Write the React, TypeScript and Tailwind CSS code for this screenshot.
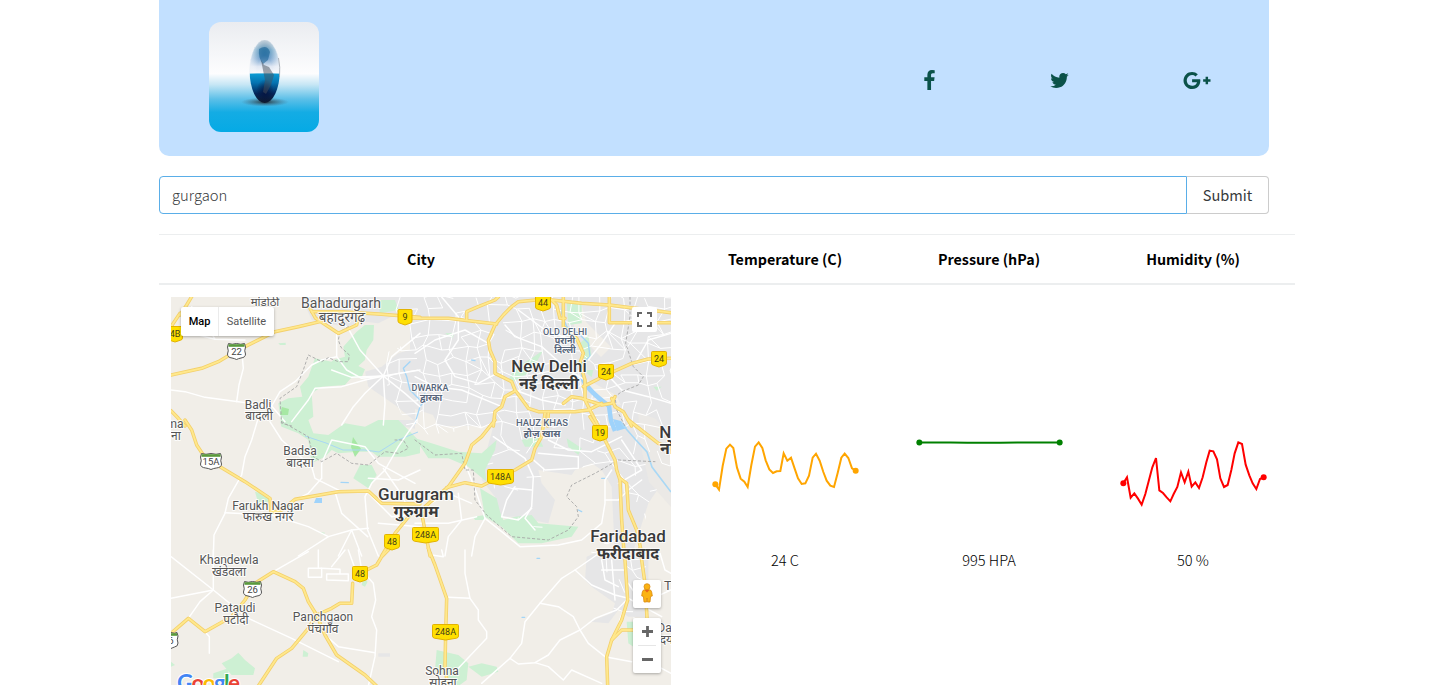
import React from "react";

type Tile = {
  x: number;
  y: number;
  urban: string[];
  green: string[];
  water: string[];
  minor: string[];
  major: string[];
  border: string[];
};

// Each tile is drawn at three units per pixel.
const tiles: Tile[] = [
  {
    x: -6,
    y: -7,
    urban: [
      "410,21 765,21 765,60 700,70 640,100 600,95 540,110 440,90",
      "600,245 650,230 700,190 765,170 765,405 690,345 610,290",
    ],
    green: [
      "575,125 600,105 627,105 625,150 605,180 600,210 580,228 600,238 590,262 555,265 510,245 480,235 505,210 540,200 535,170",
      "450,205 500,215 515,240 560,262 540,285 470,290 440,310 445,380 400,410 350,410 340,340 370,325 412,320 405,290 430,260",
      "640,30 690,30 700,60 645,70",
      "340,160 362,158 362,165 345,165",
    ],
    water: ["735,215 715,235 725,260 735,300 765,330"],
    minor: [
      "18,300 60,305 120,322 220,335 320,348 360,395",
      "230,178 235,235 222,285 215,335",
      "515,130 515,200 470,210 440,225 390,275 345,305 320,348",
      "515,200 545,240 590,265 655,258",
      "655,258 585,180 555,125 540,105",
      "655,258 660,340 655,405",
      "655,258 600,310 565,350 530,405",
      "655,258 720,310 765,350",
      "655,258 600,270 530,290 450,295 430,330 380,395",
      "655,258 680,200 765,130",
      "655,258 765,240",
      "80,130 150,148 240,150",
      "80,50 120,95 150,148",
      "655,258 560,262 500,240",
    ],
    major: [
      "18,255 110,235 160,215 210,185 270,155 330,125 400,110 465,95",
      "435,55 452,85 520,130 575,105 582,70",
      "440,65 530,65 640,72 765,82",
      "45,75 65,45 83,15",
      "18,110 45,70",
      "18,362 40,385 60,408",
    ],
    border: [
      "550,110 525,125 520,150 528,172 553,195 550,215 520,215 490,203 470,215 430,195 415,240 395,290 345,325 350,400 380,408",
    ],
  },
  {
    x: 244,
    y: -7,
    urban: ["-15,21 768,21 768,408 0,408 -15,330"],
    green: [
      "455,35 500,35 500,100 460,105",
      "385,180 350,205 300,235 280,270 295,275 340,250 360,225",
      "520,135 530,200 510,215 495,160",
      "90,130 118,130 112,145",
      "515,240 535,240 530,262 515,250",
      "715,290 740,290 725,302",
    ],
    water: [
      "445,25 440,70 455,110 490,130 520,160 525,200 500,220 500,260 520,290",
      "0,400 15,350 30,330 30,310",
      "170,210 180,212",
    ],
    minor: [
      "0,190 60,150 150,120 220,160",
      "80,21 130,80 130,150 90,210 120,260 190,280 245,250",
      "0,260 60,290 140,300 260,350",
      "270,105 300,140 380,170 460,240 510,270",
      "310,60 390,120 470,150",
      "300,300 380,330 450,345",
      "600,100 560,160 520,210",
      "660,220 700,150 768,130",
      "573,250 620,300 700,320 768,340",
    ],
    major: [
      "-10,85 100,85 160,92 245,102",
      "155,88 155,65 190,50 240,30 250,21",
      "385,28 310,35 290,50 265,75 240,105 220,150 225,180 240,215 240,250 290,275 300,300 340,355 370,365 480,365 520,360 560,340",
      "300,303 270,320 260,350 240,365 235,408",
      "400,21 425,45 435,85 450,85",
      "445,21 445,110 485,145 505,190 495,220 510,270 510,330 530,370 550,408",
      "445,340 470,320 500,325 560,345 590,340 600,320",
      "583,21 583,98 768,98",
      "410,30 500,40 583,45 768,68",
      "505,290 573,255 650,220 700,207 768,205",
      "590,325 600,350 625,365 650,408",
      "400,370 397,408",
    ],
    border: [
      "645,21 645,80 632,160 655,230 685,260 670,285 620,305 600,320 605,360 630,408",
    ],
  },
  {
    x: -6,
    y: 123,
    urban: ["690,0 768,0 768,30 720,20"],
    green: [
      "345,5 430,0 445,40 490,45 540,10 600,20 640,0 700,0 765,65 765,100 720,110 640,110 620,95 580,95 520,100 500,90 480,110 440,130 430,60 400,40 350,20",
      "585,135 620,135 635,165 610,205 565,175",
      "270,215 310,225 312,245 280,250",
      "460,335 480,338 475,345",
    ],
    water: [
      "528,187 550,188",
    ],
    minor: [
      "315,5 350,60 440,140 450,175 530,215",
      "278,0 260,60 240,110 230,165 190,235 180,280 147,345 145,408",
      "180,278 320,285 430,320 490,350 560,330 610,325",
      "470,175 430,220 395,238",
      "470,175 470,130 500,60 600,80 640,130 750,190",
      "490,350 400,408",
      "755,0 700,80 660,150 620,190 600,230 608,330 640,408",
      "655,145 700,210 720,245",
      "510,215 530,280 608,350",
      "520,408 560,330 590,408",
      "610,175 700,180 765,150",
      "610,220 680,290 765,280",
      "640,310 765,320",
    ],
    major: [
      "60,0 80,30 95,75 115,105",
      "165,140 240,185 315,235 318,278 350,270 390,238 520,215 610,213 650,250 765,252",
      "650,408 690,340 735,285",
    ],
    border: [
      "350,5 430,50 445,110 470,125 515,100 560,130 610,135 660,95 700,100 730,85 715,60 690,60",
    ],
  },
  {
    x: 244,
    y: 123,
    urban: [
      "240,0 768,0 768,150 700,250 650,408 600,408 590,200 560,150 530,130 480,150 470,165 370,150 380,190 420,240 400,310 300,290 255,290 240,230 200,180 210,110",
    ],
    green: [
      "0,55 50,70 130,95 200,100 245,60 240,90 210,150 215,185 160,140 100,115 40,115",
      "195,205 245,235 255,275 265,300 300,290 350,285 370,310 490,320 470,350 380,370 310,370 260,320 210,290",
      "320,60 370,50 385,80 330,80",
      "455,55 500,85 490,105 460,80",
      "175,290 210,285 210,300 180,300",
    ],
    water: ["490,270 500,275", "560,175 575,175"],
    minor: [
      "235,50 330,115 355,170 350,260 330,295 360,330",
      "400,60 460,90 530,95 620,50",
      "300,200 275,240 260,290",
      "295,205 350,210",
      "210,295 260,335 315,380 430,375 500,360 560,310 570,250 570,180 590,150",
      "150,130 185,220 210,295 180,350 170,408",
      "610,190 680,150 620,60",
      "350,115 390,150 490,145 490,110 370,100",
      "130,220 140,300 100,350 90,408",
      "0,310 100,310 185,290",
      "30,260 100,220 170,250",
      "570,240 610,240 640,210 680,180",
      "260,290 310,300 350,265",
    ],
    major: [
      "240,0 200,50 170,75 150,130 100,200 30,260 20,280 45,408",
      "95,203 150,188 200,198 255,170 300,150 350,120 360,85 380,50 390,-20",
      "525,-10 570,60 600,120 605,150 615,180 620,300 628,408",
      "615,175 635,190 640,270 665,330 682,408",
      "640,0 730,70 768,85",
    ],
    border: [
      "0,60 60,105 140,100 150,150 175,150 180,240 215,285 290,350 400,360 460,330 490,290 485,260 455,230 470,195 540,160 610,120 720,125",
    ],
  },
  {
    x: -6,
    y: 253,
    urban: ["640,310 675,310 675,320 640,320"],
    green: [
      "170,340 200,325 220,308 240,330 270,355 265,375 200,375",
      "145,370 190,355 190,385 145,385",
      "595,85 608,95 600,110 590,105",
      "415,300 430,310 428,320 413,320",
      "18,335 30,345 18,350",
    ],
    water: [],
    minor: [
      "18,20 145,120 250,205 380,265 520,335",
      "145,0 145,120 18,145",
      "145,120 105,155 70,205",
      "325,65 430,5",
      "480,255 520,290 630,308",
      "580,0 590,60 625,100 632,150 620,200 635,240 630,320 610,408",
      "430,55 470,55 470,82 430,82 430,55",
      "470,55 525,58 525,72 550,72 550,92 485,90 485,72 525,72",
      "460,0 460,55",
      "120,245 133,260 133,310",
      "540,0 500,50",
      "550,0 575,70",
    ],
    major: [
      "18,250 70,205 120,245 200,200 240,150 270,100 325,65 390,95 415,115 430,155 455,195",
      "455,195 500,175 525,160 560,160 563,100",
      "585,70 635,45 650,20 675,-5",
      "455,195 430,235 380,295 335,325 280,408",
      "455,195 480,255 515,315 600,375 635,408",
    ],
    border: [],
  },
  {
    x: 244,
    y: 253,
    urban: [
      "515,20 560,0 700,0 700,200 640,200 610,180 580,220 525,215 590,190 600,160 530,110 510,90",
    ],
    green: [
      "65,300 130,315 160,340 155,390 130,408 95,380 60,360",
      "160,350 200,340 245,350 250,365 200,380",
      "635,215 655,215 655,290 640,280",
    ],
    water: ["366,25 374,25", "321,202 329,202"],
    minor: [
      "150,0 150,70 165,145 100,142",
      "165,145 190,180 190,210 215,245 215,265 130,355",
      "545,15 480,60 440,85 375,160 330,215 320,280 285,325 200,400",
      "375,160 430,170 475,200 495,240 520,280 570,320 650,335",
      "480,60 530,105 600,135 640,145 740,200",
      "285,325 310,342 360,338 400,315 435,270 495,240 540,205 605,180 640,145",
      "360,338 400,350 445,390 470,360 560,400",
      "80,0 85,20 50,15",
      "560,30 570,90 610,110",
      "590,30 600,150",
      "560,60 630,60",
      "735,10 750,60 768,70",
      "730,350 768,370",
      "640,100 680,160 768,120",
    ],
    major: [
      "40,-5 60,45 95,145 92,250 90,350 98,408",
      "628,0 638,150 620,210 590,270 575,320 578,408",
      "590,270 620,240 660,240",
      "675,-5 690,100 697,220",
    ],
    border: [],
  },
];

const streets = (() => {
  let seed = 11;
  const rnd = () => {
    seed = (seed * 16807) % 2147483647;
    return seed / 2147483647;
  };
  const step = 13;
  const cols = 26;
  const rows = 32;
  const pts: number[][][] = [];
  for (let r = 0; r < rows; r++) {
    pts.push([]);
    for (let c = 0; c < cols; c++) {
      pts[r].push([186 + c * step + rnd() * 9, -6 + r * step + rnd() * 9]);
    }
  }
  let d = "";
  const line = (a: number[], b: number[]) => {
    d += `M${a[0].toFixed(1)} ${a[1].toFixed(1)}L${b[0].toFixed(1)} ${b[1].toFixed(1)}`;
  };
  for (let r = 0; r < rows - 1; r++) {
    for (let c = 0; c < cols - 1; c++) {
      const dense = r < 11 ? 0.75 : 0.28;
      if (rnd() < dense) line(pts[r][c], pts[r][c + 1]);
      if (rnd() < dense) line(pts[r][c], pts[r + 1][c]);
      if (rnd() < 0.12) line(pts[r][c], pts[r + 1][c + 1]);
    }
  }
  return d;
})();

function Layer({
  pick,
  poly,
  ...rest
}: { pick: "urban" | "green" | "water" | "minor" | "major" | "border"; poly?: boolean } & React.SVGProps<SVGGElement>) {
  return (
    <g strokeLinejoin="round" strokeLinecap="round" fill="none" {...rest}>
      {tiles.map((t, i) => (
        <g key={i} transform={`translate(${t.x} ${t.y}) scale(0.33333)`}>
          {t[pick].map((p, j) =>
            poly ? <polygon key={j} points={p} /> : <polyline key={j} points={p} />
          )}
        </g>
      ))}
    </g>
  );
}

type Label = [string, number, number, number, string];

// text, centre x, baseline, size, kind
const labels: Label[] = [
  ["मांडोठी", 94, 9, 11.5, "t"],
  ["Bahadurgarh", 170, 11, 14, "t"],
  ["बहादुरगढ़", 171, 25, 13.5, "t"],
  ["Badli", 87, 112, 12, "t"],
  ["बादली", 88, 123, 12, "t"],
  ["ma", 4, 131, 12, "t"],
  ["ना", 5, 143, 12, "t"],
  ["Badsa", 129, 158, 12, "t"],
  ["बादसा", 129, 170, 12, "t"],
  ["Farukh Nagar", 97, 213, 12, "t"],
  ["फारुख नगर", 97, 224, 12, "t"],
  ["Khandewla", 58, 267, 12, "t"],
  ["खंडेवला", 58, 279, 12, "t"],
  ["Pataudi", 64, 315, 12, "t"],
  ["पटौदी", 65, 327, 12, "t"],
  ["Panchgaon", 152, 324, 12, "t"],
  ["पंचगाँव", 152, 336, 12, "t"],
  ["Sohna", 271, 378, 12, "t"],
  ["सोहना", 272, 390, 12, "t"],
  ["DWARKA", 259, 94, 9, "d"],
  ["द्वारका", 260, 104, 9, "dh"],
  ["OLD DELHI", 394, 38, 9, "d"],
  ["पुरानी", 394, 47, 9, "dh"],
  ["दिल्ली", 394, 56, 9, "dh"],
  ["HAUZ KHAS", 371, 129, 9.5, "d"],
  ["हौज़ खास", 371, 140, 9.7, "dh"],
  ["New Delhi", 378, 75, 16.8, "c"],
  ["नई दिल्ली", 378, 92, 16, "ch"],
  ["Gurugram", 245, 203, 17, "c"],
  ["गुरुग्राम", 245, 220, 16, "ch"],
  ["Faridabad", 457, 245, 17, "c"],
  ["फरीदाबाद", 457, 262, 16, "ch"],
  ["No", 499, 141, 17, "c"],
  ["नोएडा", 508, 157, 16, "ch"],
  ["T", 497, 293, 13, "t"],
  ["Dayal", 501, 335, 12, "t"],
  ["दयाल", 501, 347, 12, "t"],
];

const labelFill: Record<string, string> = {
  t: "#555",
  d: "#56657a",
  dh: "#56657a",
  c: "#3a3a3a",
  ch: "#3a3a3a",
};

const labelWeight: Record<string, number> = { t: 400, d: 500, dh: 700, c: 500, ch: 700 };

const shields: [string, number, number, number][] = [
  ["9", 234, 20, 14],
  ["44", 372, 6, 15],
  ["24", 435, 75, 15],
  ["24", 488, 62, 15],
  ["19", 429, 136, 15],
  ["148A", 329.5, 180, 26],
  ["248A", 254.5, 238, 26],
  ["48", 221, 245, 15],
  ["48", 189, 277, 15],
  ["248A", 274.5, 335, 26],
  ["4B", 4, 37, 15],
];

const crests: [string, number, number, number][] = [
  ["22", 65.5, 54, 18],
  ["15A", 40, 164, 21],
  ["26", 81.5, 292, 18],
  ["6", 0, 343, 14],
];

function MapCanvas() {
  return (
    <svg viewBox="0 0 500 388" className="block h-[388px] w-[500px]">
      <defs>
        <clipPath id="town">
          <polygon points="215,0 265,0 500,0 500,170 475,210 475,330 440,330 445,290 420,255 443,240 441,190 420,170 370,175 375,235 340,220 330,200 315,180 322,130 240,140 232,120 215,86 205,60 240,45" />
        </clipPath>
      </defs>
      <rect width="500" height="388" fill="#f1eee8" />
      <Layer pick="urban" poly style={{ fill: "#e6e6e7" }} />
      <polygon points="467,115 485,122 500,140 500,210 478,185 470,150" fill="#ebe9e6" />
      <path d="M395 5L410 5 415 25 440 50 430 60 405 35zM415 82L445 98 450 108 438 106 420 96z" fill="#f1eee8" />
      <path d="M244 112L262 118 270 135 244 140z" fill="#f1eee8" />
      <Layer pick="green" poly style={{ fill: "#cdf0d3" }} />
      <path d="M111 110l7 2-1 6-8 0zM182 140l8 12-6 8-4-10z" fill="#a7e8a4" />
      <path d="M145 201h6v5h-8z" fill="#9fd3fb" />
      <path d={streets} stroke="#fff" strokeWidth="1" fill="none" clipPath="url(#town)" />
      <Layer pick="water" stroke="#a3d5f7" strokeWidth="4" />
      <path
        d="M134 139L155 146 172 153 194 153 208 155 227 143 247 135"
        stroke="#a9d8f5"
        strokeWidth="1"
        fill="none"
      />
      <path
        d="M411 80C415 92 430 103 438 109L440 124 444 134"
        stroke="#9fd3fb"
        strokeWidth="4.5"
        fill="none"
      />
      <path d="M442 122L450 124 456 131 446 134z" fill="#9fd3fb" />
      <path d="M450 126L464 142 476 155 481 170 500 195" stroke="#a9d8f5" strokeWidth="1.6" fill="none" />
      <Layer pick="minor" stroke="#fff" strokeWidth="4.4" />
      <Layer pick="border" stroke="#a5a5a5" strokeWidth="2.6" strokeDasharray="7 8" />
      <Layer pick="major" stroke="#f3d06c" strokeWidth="10.5" />
      <Layer pick="major" stroke="#ffe88c" strokeWidth="5.5" />

      <g textAnchor="middle">
        {labels.map(([text, x, y, size, kind], i) => (
          <text
            key={i}
            x={x}
            y={y}
            fontSize={size}
            fontWeight={labelWeight[kind]}
            fill={labelFill[kind]}
            stroke="#fff"
            strokeOpacity="0.85"
            strokeWidth="2"
            paintOrder="stroke"
            strokeLinejoin="round"
            className="font-[Roboto,'Noto_Sans_Devanagari','Noto_Sans',sans-serif]"
          >
            {text}
          </text>
        ))}
        {shields.map(([text, x, y, w], i) => (
          <g key={i} className="font-[Roboto,sans-serif]">
            <path
              transform={`translate(${x} ${y})`}
              d={`M${-w / 2 + 1} -7.5H${w / 2 - 1}Q${w / 2} -7.5 ${w / 2} -6.5V4Q${w / 2} 5.8 ${w / 2 - 2} 6.2L0 8L${-w / 2 + 2} 6.2Q${-w / 2} 5.8 ${-w / 2} 4V-6.5Q${-w / 2} -7.5 ${-w / 2 + 1} -7.5Z`}
              fill="#ffdf00"
              stroke="#e2b203"
              strokeWidth="1"
              strokeLinejoin="round"
            />
            <text x={x} y={y + 3.2} fontSize="9" fontWeight="400" fill="#443f17">
              {text}
            </text>
          </g>
        ))}
        {crests.map(([text, x, y, w], i) => (
          <g key={i} className="font-[Roboto,sans-serif]">
            <path
              transform={`translate(${x} ${y})`}
              d={`M${-w / 2 + 1} -7.5Q${-w / 4} -6 0 -7.5Q${w / 4} -6 ${w / 2 - 1} -7.5L${w / 2} -4Q${w / 2 - 1.5} 0 ${w / 2} 3Q${w / 2} 6.5 ${w / 4} 7Q2 7.5 0 8.5Q-2 7.5 ${-w / 4} 7Q${-w / 2} 6.5 ${-w / 2} 3Q${-w / 2 + 1.5} 0 ${-w / 2} -4Z`}
              fill="#fff"
              stroke="#555"
              strokeWidth="1"
            />
            <rect x={x - w / 2 + 1} y={y - 6.8} width={w - 2} height="2.6" fill="#5a9a3c" />
            <text x={x} y={y + 4.2} fontSize="9.500" fill="#444">
              {text}
            </text>
          </g>
        ))}
      </g>
      <text
        x="6"
        y="394"
        fontSize="22.500"
        stroke="#fff"
        strokeWidth="2"
        paintOrder="stroke"
        className="font-[Lato,sans-serif] font-bold"
        textLength="63"
      >
        <tspan fill="#4285f4">G</tspan>
        <tspan fill="#ea4335">o</tspan>
        <tspan fill="#fbbc05">o</tspan>
        <tspan fill="#4285f4">g</tspan>
        <tspan fill="#34a853">l</tspan>
        <tspan fill="#ea4335">e</tspan>
      </text>
    </svg>
  );
}

function CityMap() {
  return (
    <div className="relative h-[388px] w-[500px] overflow-hidden">
      <MapCanvas />
      <div className="absolute left-[10px] top-[10px] flex h-[29px] items-center rounded-[2px] bg-white font-[Roboto,sans-serif] text-[11px] leading-none shadow-[0_1px_3px_rgba(0,0,0,0.3)]">
        <span className="flex h-full w-[38px] items-center justify-center border-r border-[#ebebeb] font-medium text-black">Map</span>
        <span className="flex w-[55px] items-center justify-center text-[#565656]">Satellite</span>
      </div>
      <div className="absolute right-[14px] top-[10px] flex h-[25px] w-[25px] items-center justify-center rounded-[2px] bg-white">
        <svg viewBox="0 0 15 15" className="h-[15px] w-[15px]" fill="none" stroke="#666" strokeWidth="2">
          <path d="M1 5V1H5M10 1H14V5M14 10V14H10M5 14H1V10" />
        </svg>
      </div>
      <div className="absolute left-[462px] top-[283px] flex h-7 w-7 items-center justify-center rounded-[2px] bg-white pb-[2px] shadow-[0_1px_3px_rgba(0,0,0,0.3)]">
        <svg viewBox="0 0 12 20" className="h-5 w-3">
          <path d="M2.5 7Q6 5.5 9.5 7Q11 8 11.3 13L9.6 13.4L9 19H6.4L6 15L5.6 19H3L2.4 13.4L.7 13Q1 8 2.5 7Z" fill="#fbb313" stroke="#d98a13" strokeWidth=".8" />
          <path d="M3.5 7L6 9.5L8.5 7Z" fill="#e8641b" />
          <circle cx="6" cy="3.7" r="3" fill="#fbb313" stroke="#d98a13" strokeWidth=".8" />
        </svg>
      </div>
      <div className="absolute left-[462px] top-[321px] flex h-[55px] w-7 flex-col items-center rounded-[2px] bg-white shadow-[0_1px_3px_rgba(0,0,0,0.3)]">
        <svg viewBox="0 0 28 55" className="h-[55px] w-7">
          <path d="M9 13.5H20M14.5 8V19M9 41.5H20" stroke="#666" strokeWidth="2.8" />
          <path d="M5 27.5H23" stroke="#e6e6e6" />
        </svg>
      </div>
    </div>
  );
}

function Globe() {
  return (
    <svg viewBox="0 0 110 110" className="block h-[110px] w-[110px] rounded-xl">
      <defs>
        <linearGradient id="sky" x1="0" y1="0" x2="0" y2="1">
          <stop offset="0" stopColor="#eaecf0" />
          <stop offset=".3" stopColor="#f6f7f9" />
          <stop offset=".47" stopColor="#fdfdfe" />
          <stop offset=".57" stopColor="#c6e6f5" />
          <stop offset=".7" stopColor="#5dc0e8" />
          <stop offset=".82" stopColor="#14ace4" />
          <stop offset="1" stopColor="#05aae5" />
        </linearGradient>
        <linearGradient id="glass" x1="0" y1="0" x2="0" y2="1">
          <stop offset="0" stopColor="#39627f" />
          <stop offset=".15" stopColor="#1a6fa5" />
          <stop offset=".3" stopColor="#7fa9d2" />
          <stop offset=".42" stopColor="#dfe7f3" />
          <stop offset=".52" stopColor="#f6f8fc" />
          <stop offset=".54" stopColor="#0b9ad2" />
          <stop offset=".68" stopColor="#0472b0" />
          <stop offset=".85" stopColor="#03265a" />
          <stop offset="1" stopColor="#131a28" />
        </linearGradient>
        <radialGradient id="rim">
          <stop offset=".5" stopColor="#fff" stopOpacity="0" />
          <stop offset="1" stopColor="#eef2f7" stopOpacity=".8" />
        </radialGradient>
        <radialGradient id="shade">
          <stop offset="0" stopColor="#222" stopOpacity=".85" />
          <stop offset="1" stopColor="#456" stopOpacity="0" />
        </radialGradient>
        <radialGradient id="core">
          <stop offset="0" stopColor="#06123c" stopOpacity=".85" />
          <stop offset="1" stopColor="#06123c" stopOpacity="0" />
        </radialGradient>
        <clipPath id="upper">
          <rect width="110" height="51.5" />
        </clipPath>
      </defs>
      <rect width="110" height="110" fill="url(#sky)" />
      <ellipse cx="56" cy="80" rx="24" ry="4.5" fill="url(#shade)" />
      <ellipse cx="55.700" cy="49.500" rx="15" ry="31.500" fill="url(#glass)" />
      <ellipse cx="55.700" cy="49.500" rx="15.500" ry="32" fill="url(#rim)" clipPath="url(#upper)" />
      <ellipse cx="56" cy="70" rx="9" ry="13" fill="url(#core)" />
      <path d="M50 27Q58 22 61 30L59 38L54 42Q49 36 50 27Z" fill="#07558b" opacity=".5" />
      <path d="M52 38L55 43L60 45L65 53L62 63L57 72L54 70L56 58L54 48Z" fill="#46505c" opacity=".5" />
      <path d="M69.500 36Q71.500 45 70.500 55" stroke="#a0a7b0" strokeWidth=".8" fill="none" />
    </svg>
  );
}

const cell = "flex items-center justify-center";

const headings = ["Temperature (C)", "Pressure (hPa)", "Humidity (%)"];

const charts = [
  {
    color: "#ffa500",
    value: "24 C",
    points:
      "46,163 57,179 68,108 79,56 90,44 100,54 111,113 122,146 133,155 143,171 154,105 165,50 176,37 187,54 197,91 208,118 219,129 230,124 241,123 251,70 262,92 273,83 284,116 294,145 305,162 316,160 327,137 338,83 348,71 359,92 370,126 380,152 391,167 402,171 413,129 424,83 434,71 445,84 456,115 467,122",
    dots: [
      [46, 163],
      [467, 122],
    ],
  },
  {
    color: "#008000",
    value: "995 HPA",
    points: "46,37.500 140,37.500 190,38.500 290,38.500 340,37.500 467,37.500",
    dots: [
      [46, 37.5],
      [467, 37.5],
    ],
  },
  {
    color: "#ff0000",
    value: "50 %",
    points:
      "46,160 57,142 68,203 79,190 90,206 101,224 112,192 122,154 133,112 144,84 154,181 165,189 176,202 187,214 197,192 208,171 219,127 230,157 241,125 251,170 262,157 273,174 284,142 295,97 305,62 316,64 327,88 337,145 348,171 359,165 370,120 380,70 391,37 402,42 413,104 424,136 434,160 445,177 456,147 467,142",
    dots: [
      [46, 160],
      [467, 142],
    ],
  },
];

export default function App() {
  return (
    <div className="h-[685px] overflow-hidden bg-white pl-[159px] font-['Noto_Sans_CJK_SC',sans-serif] text-[14.3px] text-black">
      <header className="flex h-[156px] w-[1110px] justify-between rounded-b-[10px] bg-[#c2e0ff] pl-[50px] pt-[22px]">
        <Globe />
        <nav className="flex h-[116px] items-center pr-[58px] text-[#0b5249]">
          <svg viewBox="479 0 864 1664" className="mr-[114px] h-5 w-[11px]" fill="currentColor">
            <path d="M1343 12v264h-157q-86 0-116 36t-30 108v189h293l-39 296h-254v759H734V905H479V609h255V391q0-186 104-288.500T1115 0q147 0 228 12z" />
          </svg>
          <svg viewBox="0 0 1792 1792" className="mr-[113px] h-[21px] w-[21px]" fill="currentColor">
            <path d="M1684 408q-67 98-162 167 1 14 1 42 0 130-38 259.500T1369.500 1125 1185 1335.500t-258 146-323 54.500q-271 0-496-145 35 4 78 4 225 0 401-138-105-2-188-64.500T285 1033q33 5 61 5 43 0 85-11-112-23-185.500-111.500T172 710v-4q68 38 146 41-66-44-105-115t-39-154q0-88 44-163 121 149 294.500 238.500T884 653q-8-38-8-74 0-134 94.500-228.500T1199 256q140 0 236 102 109-21 205-78-37 115-142 178 93-10 186-50z" />
          </svg>
          <svg viewBox="0 0 2304 1792" className="h-[21px] w-[28px]" fill="currentColor">
            <path d="M1437 913q0 208-87 370.500t-248 254-369 91.500q-149 0-285-58t-234-156-156-234-58-285 58-285 156-234 234-156 285-58q286 0 491 192l-199 191q-117-113-292-113-123 0-227.500 62T340 671.500 279 896t61 224.500T505.500 1289 733 1351q83 0 152.500-23t114.500-57.500 78.500-78.500 49-83 21.500-74H733V783h692q12 63 12 122v8zm867-122v210h-209v209h-210v-209h-209V791h209V582h210v209h209z" />
          </svg>
        </nav>
      </header>

      <form className="mt-5 flex h-[38px] w-[1110px]" onSubmit={(e) => e.preventDefault()}>
        <div className="flex w-[1028px] items-center rounded-l border border-[#5aaee8] pl-3 text-[14.8px] font-light text-[#373a3c]">gurgaon</div>
        <button className="flex-1 rounded-r border border-l-0 border-[#ccc] text-[14.6px] text-[#373a3c]">Submit</button>
      </form>

      <div className="mt-5 w-[1136px] border-t border-[#eceeef]">
        <div className="grid h-[50px] grid-cols-[524px_204px_204px_204px] border-b-2 border-[#eceeef] font-bold">
          <div className={cell}>City</div>
          {headings.map((h) => (
            <div key={h} className={cell}>
              {h}
            </div>
          ))}
        </div>
        <div className="grid grid-cols-[524px_204px_204px_204px]">
          <div className="p-3">
            <CityMap />
          </div>
          {charts.map((c) => (
            <div key={c.value} className="flex flex-col items-center pt-[145px]">
              <svg viewBox="0 0 510 240" className="h-[80px] w-[170px]">
                <polyline points={c.points} fill="none" stroke={c.color} strokeWidth="6" />
                {c.dots.map(([x, y]) => (
                  <circle key={x} cx={x} cy={y} r="9" fill={c.color} />
                ))}
              </svg>
              <div className="mt-10 text-[14.6px] font-light leading-5">{c.value}</div>
            </div>
          ))}
        </div>
      </div>
    </div>
  );
}
